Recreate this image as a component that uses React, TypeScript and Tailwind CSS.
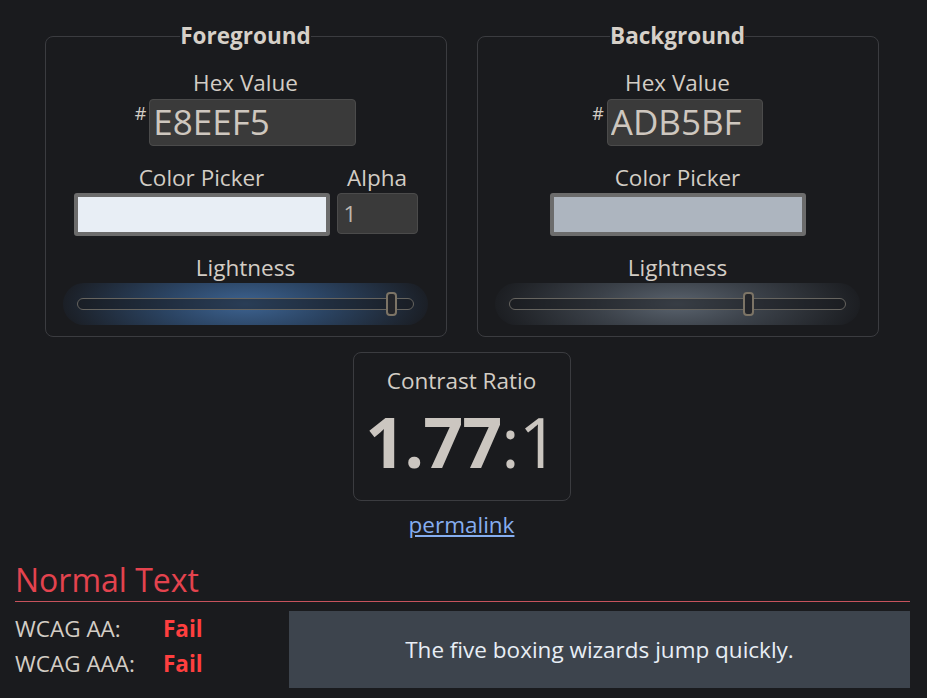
import React from 'react';

type Side = {
  title: string;
  hex: string;
  hexWidth: string;
  alpha: boolean;
  lightness: number;
  glow: string;
};

const sides: Side[] = [
  {
    title: 'Foreground',
    hex: 'E8EEF5',
    hexWidth: 'w-[207px]',
    alpha: true,
    lightness: 0.95,
    glow: 'bg-[radial-gradient(ellipse_50%_140%_at_center,#3d6391_0%,#2b4463_45%,#1b1f26_100%)]',
  },
  {
    title: 'Background',
    hex: 'ADB5BF',
    hexWidth: 'w-[156px]',
    alpha: false,
    lightness: 0.72,
    glow: 'bg-[radial-gradient(ellipse_50%_140%_at_center,#5a636e_0%,#3b4149_45%,#1c1e22_100%)]',
  },
];

function Slider({ value, glow }: { value: number; glow: string }) {
  return (
    <div className={`mt-px flex h-[42px] w-[365px] items-center rounded-full px-[14px] ${glow}`}>
      <div className="relative h-[12px] w-full rounded-full border border-[#66645f] bg-[#15171b]/50">
        <div
          className="absolute top-1/2 h-[24px] w-[11px] -translate-y-1/2 rounded-[4px] border-2 border-[#7c7466] bg-[#23252a]"
          style={{ left: `${value * 100}%`, marginLeft: `${-value * 11}px` }}
        />
      </div>
    </div>
  );
}

function ColorPanel({ side }: { side: Side }) {
  return (
    <fieldset className="flex w-[402px] flex-col items-center rounded-lg border border-[#3b3c40] pb-[11px]">
      <legend className="mx-auto px-0 text-[22.5px] font-bold leading-7 text-[#d6d0c8]">{side.title}</legend>

      <div className="mt-[19px] leading-7">Hex Value</div>
      <div className="mt-[2px] flex items-start">
        <span className="mt-[2px] mr-[3px] text-lg leading-6">#</span>
        <input
          readOnly
          value={side.hex}
          className={`h-[47px] ${side.hexWidth} rounded-[4px] border border-[#4b4b4b] bg-[#3a3a3a] px-[3px] text-[35px] text-[#cec7bf] outline-none`}
        />
      </div>

      <div className="mt-[18px] flex items-end gap-[7px]">
        <div className="flex w-[256px] flex-col items-center">
          <div className="leading-7">Color Picker</div>
          <div className="mt-px h-[43px] w-full rounded-[3px] border-[4px] border-[#6c6c6c]" style={{ backgroundColor: `#${side.hex}` }} />
        </div>
        {side.alpha && (
          <div className="flex w-[81px] flex-col items-center">
            <div className="leading-7">Alpha</div>
            <input
              readOnly
              value="1"
              className="mt-px mb-[2px] h-[41px] w-full rounded-[4px] border border-[#4b4b4b] bg-[#3a3a3a] px-[6px] text-[22.5px] text-[#bdb7b0] outline-none"
            />
          </div>
        )}
      </div>

      <div className="mt-[18px] leading-7">Lightness</div>
      <Slider value={side.lightness} glow={side.glow} />
    </fieldset>
  );
}

export default function App() {
  return (
    <div className="min-h-screen bg-[#1a1b1e] pt-[22px] pl-[15px] pr-[17px] pb-6 font-['Open_Sans',sans-serif] text-[22.5px] text-[#d3cdc5]">
      {/* COLOUR PANELS */}
      <div className="flex justify-center gap-[30px] pr-[2px]">
        {sides.map((s) => (
          <ColorPanel key={s.title} side={s} />
        ))}
      </div>

      {/* RATIO */}
      <div className="flex flex-col items-center pr-[2px]">
        <div className="mt-[15px] flex w-[218px] flex-col items-center rounded-lg border border-[#3b3c40] pt-[14px] pb-[24px]">
          <div className="leading-7">Contrast Ratio</div>
          <div className="mt-[11px] text-[70px] leading-[70px] tracking-[-1px] text-[#cbc6c0]">
            <span className="font-bold">1.77</span>
            <span>:1</span>
          </div>
        </div>
        <a href="#" className="mt-[10px] leading-7 text-[#86aef0] underline underline-offset-2">
          permalink
        </a>
      </div>

      {/* RESULTS */}
      <h2 className="mt-[21px] border-b border-[#c7525c] pb-px text-[32px] leading-10 text-[#e4434e]">Normal Text</h2>
      <div className="mt-[9px] flex">
        <div className="w-[274px]">
          <div className="flex leading-[35px]">
            <span className="w-[148px]">WCAG AA:</span>
            <span className="font-bold text-[#ff3f3f]">Fail</span>
          </div>
          <div className="flex leading-[35px]">
            <span className="w-[148px]">WCAG AAA:</span>
            <span className="font-bold text-[#ff3f3f]">Fail</span>
          </div>
        </div>
        <div className="flex h-[77px] flex-1 items-center justify-center bg-[#3d444d] text-[#e8eef5]">
          The five boxing wizards jump quickly.
        </div>
      </div>
    </div>
  );
}
